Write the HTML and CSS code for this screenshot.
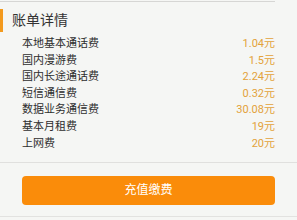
FILE: index.html
```html
<!DOCTYPE html>
<html lang="zh">
<head>
<meta charset="utf-8">
<link rel="stylesheet" href="styles.css">
</head>
<body>
<div class="topline"></div>
<div class="header">账单详情</div>
<div class="list">
  <div class="row"><span>本地基本通话费</span><span class="val">1.04元</span></div>
  <div class="row"><span>国内漫游费</span><span class="val">1.5元</span></div>
  <div class="row"><span>国内长途通话费</span><span class="val">2.24元</span></div>
  <div class="row"><span>短信通信费</span><span class="val">0.32元</span></div>
  <div class="row"><span>数据业务通信费</span><span class="val">30.08元</span></div>
  <div class="row"><span>基本月租费</span><span class="val">19元</span></div>
  <div class="row"><span>上网费</span><span class="val">20元</span></div>
</div>
<div class="divider"></div>
<div class="btnwrap"><div class="btn">充值缴费</div></div>
<div class="bottomline"></div>
</body>
</html>
```
FILE: styles.css
```css
html, body {
  margin: 0;
  padding: 0;
  background: #f5f6f4;
  font-family: "Roboto", "Noto Sans CJK SC", sans-serif;
  color: #2e2e2e;
  width: 297px;
  height: 220px;
  overflow: hidden;
}
.topline {
  height: 1px;
  margin-top: 1px;
  margin-right: 22px;
  background: #d6d6d4;
}
.header {
  margin-top: 7px;
  height: 23px;
  line-height: 23px;
  border-left: 3px solid #f39a1e;
  padding-left: 9px;
  font-size: 14px;
  color: #333;
}
.list {
  margin-top: 4px;
  padding: 0 22px;
}
.row {
  display: flex;
  justify-content: space-between;
  font-size: 11px;
  line-height: 16.6px;
  height: 16.6px;
}
.val {
  color: #e3a23a;
}
.divider {
  margin-top: 10px;
  height: 1px;
  background: #e0e0de;
}
.btnwrap {
  padding: 13px 22px 0;
}
.btn {
  height: 29px;
  line-height: 29px;
  border-radius: 4px;
  background: #fa8c0a;
  color: #fff;
  text-align: center;
  font-size: 12px;
}
.bottomline {
  margin-top: 11px;
  height: 1px;
  background: #e2e2e0;
}
```
